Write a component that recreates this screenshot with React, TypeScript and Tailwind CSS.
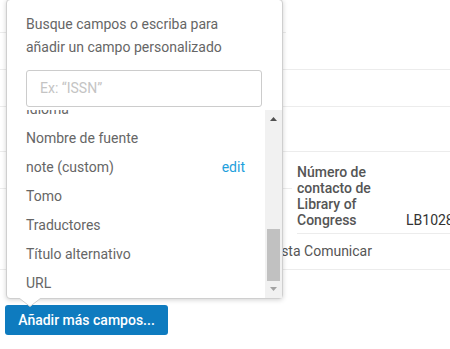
import React from "react";

const items: { label: string; edit?: boolean }[] = [
  { label: "Idioma" },
  { label: "Nombre de fuente" },
  { label: "note (custom)", edit: true },
  { label: "Tomo" },
  { label: "Traductores" },
  { label: "Título alternativo" },
  { label: "URL" },
];

export default function App() {
  return (
    <div
      className="relative w-[450px] h-[349px] overflow-hidden bg-white text-[14px]"
      style={{ fontFamily: "Roboto, 'Liberation Sans', sans-serif" }}
    >
      {/* background page */}
      <div className="flex flex-col">
        <div className="h-[70px] border-b border-[#ececec]">
          <div className="h-[33px] w-[286px] border-b border-[#ececec]" />
        </div>
        <div className="h-[37px] border-b border-[#ececec]" />
        <div className="h-[45px] border-b border-[#ececec]" />
        <div className="flex">
          <div className="w-[292px] shrink-0 h-[37px] border-b border-[#ececec]" />
          <div className="ml-[5px] w-[153px] shrink-0 h-[82px] border-b border-[#ececec] flex items-end pt-[13px] pb-[5px]">
            <div className="w-[109px] shrink-0 leading-[16px] font-medium text-[#555]">
              Número de contacto de Library of Congress
            </div>
            <div className="shrink-0 leading-[16px] text-[#333] whitespace-nowrap">LB1028.34</div>
          </div>
        </div>
        <div className="h-[36px] border-b border-[#ececec] flex items-center pl-[255px] text-[#555] whitespace-nowrap">
          Revista Comunicar
        </div>
        <button className="mt-[35px] ml-[5px] w-[163px] h-[30px] rounded-[3px] bg-[#0e7bbf] text-white font-medium text-[14px] flex items-center justify-center">
          Añadir más campos...
        </button>
      </div>

      {/* popover */}
      <div className="absolute left-[6px] top-[-1px] w-[277px] h-[300px] bg-white border border-[#cfcfcf] rounded-[4px] shadow-[0_1px_5px_rgba(0,0,0,0.18)] flex flex-col">
        <div className="pt-[13px] pl-[19px] leading-[23px] text-[#666]">
          Busque campos o escriba para
          <br />
          añadir un campo personalizado
        </div>
        <div className="mt-[11px] ml-[19px] w-[236px] h-[37px] border border-[#cccccc] rounded-[3px] flex items-center pl-[13px] text-[#c4c4c4]">
          Ex: “ISSN”
        </div>
        <div className="relative mt-[3px] h-[188px] overflow-hidden">
          <div className="-mt-[15px] pr-[17px] text-[#666]">
            {items.map((it) => (
              <div
                key={it.label}
                className="h-[29px] leading-[29px] pl-[19px] pr-[20px] flex justify-between"
              >
                <span>{it.label}</span>
                {it.edit && <span className="text-[#1ea0dc]">edit</span>}
              </div>
            ))}
          </div>
          {/* scrollbar */}
          <div className="absolute right-0 top-0 w-[17px] h-[188px] bg-[#f1f1f1]">
            <svg className="absolute left-[5px] top-[7px]" width="7" height="4" viewBox="0 0 7 4">
              <polygon points="0,4 3.5,0 7,4" fill="#505050" />
            </svg>
            <div className="absolute left-[2px] top-[119px] w-[13px] h-[52px] bg-[#c1c1c1]" />
            <svg className="absolute left-[5px] top-[177px]" width="7" height="4" viewBox="0 0 7 4">
              <polygon points="0,0 3.5,4 7,0" fill="#a3a3a3" />
            </svg>
          </div>
        </div>
      </div>

      {/* caret */}
      <svg className="absolute left-[19px] top-[298px]" width="22" height="9" viewBox="0 0 22 9">
        <polygon points="0,0 22,0 11,8.5" fill="#ffffff" />
        <polyline points="0,0 11,8.5 22,0" fill="none" stroke="#cfcfcf" strokeWidth="1" />
      </svg>
    </div>
  );
}
